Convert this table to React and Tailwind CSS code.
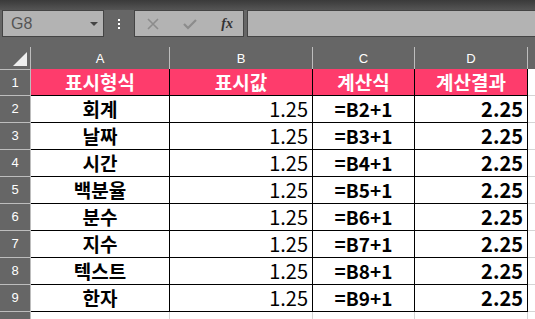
const rows = [
  ["회계", "B2"],
  ["날짜", "B3"],
  ["시간", "B4"],
  ["백분율", "B5"],
  ["분수", "B6"],
  ["지수", "B7"],
  ["텍스트", "B8"],
  ["한자", "B9"],
];

const font = { fontFamily: '"Noto Sans CJK KR", "Noto Sans", sans-serif' };

export default function App() {
  return (
    <div
      className="w-[535px] h-[319px] overflow-hidden bg-[#666666] text-black"
      style={font}
    >
      {/* formula bar */}
      <div className="h-[10px] bg-gradient-to-b from-[#3a3a3a] to-[#555555]" />
      <div className="flex h-[27px] items-stretch bg-[#666666]">
        <div className="ml-[2px] flex w-[102px] items-center justify-between border border-[#444444] bg-[#b3b3b3] pl-[8px] pr-[5px]">
          <span className="font-['Liberation_Sans'] text-[16px] text-[#555555]">G8</span>
          <span className="h-0 w-0 border-x-[4px] border-t-[4px] border-x-transparent border-t-[#444444]" />
        </div>
        <div className="flex w-[30px] flex-col items-center justify-center gap-[2px]">
          <span className="h-[2px] w-[2px] bg-white" />
          <span className="h-[2px] w-[2px] bg-white" />
          <span className="h-[2px] w-[2px] bg-white" />
        </div>
        <div className="flex w-[110px] items-center justify-between border border-[#444444] bg-[#b3b3b3] pl-[12px] pr-[10px]">
          <svg width="12" height="12" viewBox="0 0 12 12" stroke="#8c8c8c" strokeWidth="1.6">
            <path d="M1 1 L11 11 M11 1 L1 11" />
          </svg>
          <svg width="14" height="12" viewBox="0 0 14 12" fill="none" stroke="#8c8c8c" strokeWidth="2.2">
            <path d="M1 6 L5 10 L13 2" />
          </svg>
          <span className="font-['Liberation_Serif'] text-[14px] font-bold italic text-[#333333]">fx</span>
        </div>
        <div className="ml-[3px] flex-1 border border-r-0 border-[#444444] bg-[#b3b3b3]" />
      </div>

      {/* column headers */}
      <div className="mt-[10px] grid h-[22px] grid-cols-[31px_139px_143px_102px_113px_1fr] text-[13px] text-white font-['Liberation_Sans']">
        <div className="relative border-r border-[#bdbdbd]">
          <svg className="absolute bottom-[3px] right-[3px]" width="14" height="14" viewBox="0 0 14 14">
            <path d="M14 0 L14 14 L0 14 Z" fill="#eeeeee" />
          </svg>
        </div>
        {["A", "B", "C", "D"].map((c) => (
          <div key={c} className="flex items-center justify-center border-r border-[#bdbdbd] pt-[2px]">
            {c}
          </div>
        ))}
        <div />
      </div>

      {/* sheet */}
      <div className="grid grid-cols-[31px_139px_143px_102px_113px_1fr]">
        <div className="flex h-[27px] items-center justify-center border-r border-b border-t border-[#bdbdbd] bg-[#666666] text-[13px] text-white font-['Liberation_Sans']">
          1
        </div>
        {["표시형식", "표시값", "계산식", "계산결과"].map((h) => (
          <div
            key={h}
            className="flex h-[27px] items-center justify-center border-r border-b border-black bg-[#fe3c6c] text-[19px] font-bold text-white"
          >
            {h}
          </div>
        ))}
        <div className="h-[27px] border-b border-[#d4d4d4] bg-white" />

        {rows.map(([label, ref], i) => (
          <div key={ref} className="contents">
            <div className="flex h-[27px] items-center justify-center border-r border-b border-[#bdbdbd] bg-[#666666] text-[13px] text-white font-['Liberation_Sans']">
              {i + 2}
            </div>
            <div className="flex h-[27px] items-center justify-center border-r border-b border-black bg-white text-[19px] font-bold">
              {label}
            </div>
            <div className="flex h-[27px] items-center justify-end border-r border-b border-black bg-white pr-[4px] text-[20px]">
              1.25
            </div>
            <div className="flex h-[27px] items-center justify-center border-r border-b border-black bg-white text-[19px] font-bold">
              ={ref}+1
            </div>
            <div className="flex h-[27px] items-center justify-end border-r border-b border-black bg-white pr-[4px] text-[20px] font-bold">
              2.25
            </div>
            <div className="h-[27px] border-b border-[#d4d4d4] bg-white" />
          </div>
        ))}

        <div className="h-[27px] border-r border-[#bdbdbd] bg-[#666666]" />
        <div className="h-[27px] border-r border-[#d4d4d4] bg-white" />
        <div className="h-[27px] border-r border-[#d4d4d4] bg-white" />
        <div className="h-[27px] border-r border-[#d4d4d4] bg-white" />
        <div className="h-[27px] border-r border-[#d4d4d4] bg-white" />
        <div className="h-[27px] bg-white" />
      </div>
    </div>
  );
}
